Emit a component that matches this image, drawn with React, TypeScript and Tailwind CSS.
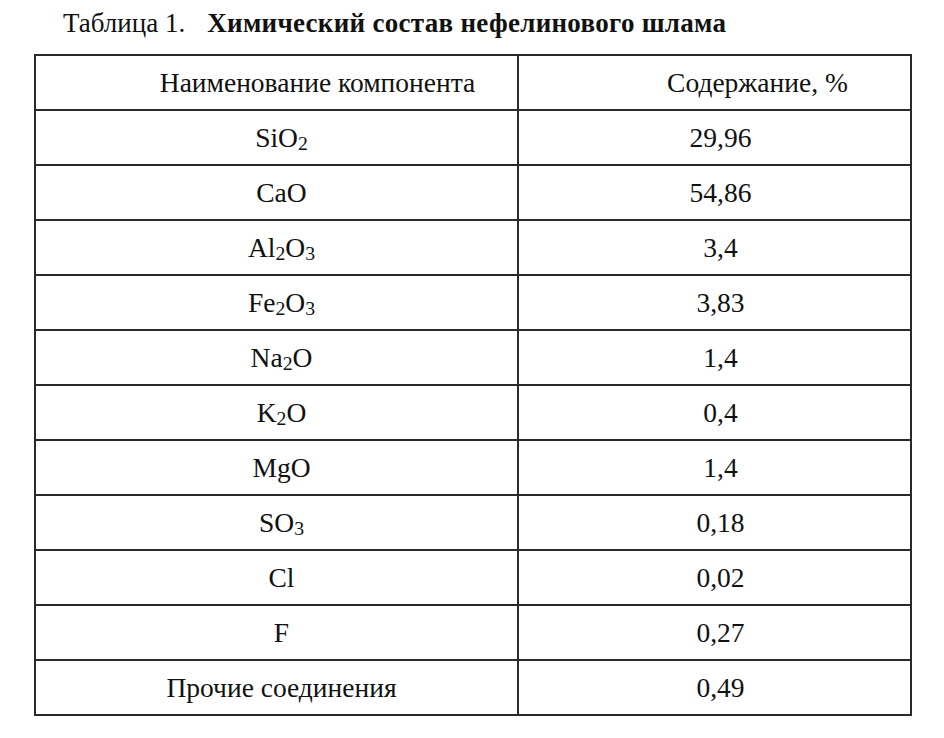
import React from "react";

type Row = {
    name: React.ReactNode;
    value: string;
};

const Sub = ({ children }: { children: React.ReactNode }) => (
    <sub className="bottom-[-0.18em] text-[72%]">{children}</sub>
);

const rows: Row[] = [
    { name: <>SiO<Sub>2</Sub></>, value: "29,96" },
    { name: "CaO", value: "54,86" },
    { name: <>Al<Sub>2</Sub>O<Sub>3</Sub></>, value: "3,4" },
    { name: <>Fe<Sub>2</Sub>O<Sub>3</Sub></>, value: "3,83" },
    { name: <>Na<Sub>2</Sub>O</>, value: "1,4" },
    { name: <>K<Sub>2</Sub>O</>, value: "0,4" },
    { name: "MgO", value: "1,4" },
    { name: <>SO<Sub>3</Sub></>, value: "0,18" },
    { name: "Cl", value: "0,02" },
    { name: "F", value: "0,27" },
    { name: "Прочие соединения", value: "0,49" },
];

const App = () => {
    return (
        <div
            className="w-[944px] h-[738px] bg-white text-[#111]"
            style={{ fontFamily: '"Liberation Serif", "Times New Roman", serif' }}
        >
            <div className="pl-[63px] pt-[8px] text-[27px] leading-[30px]">
                Таблица 1.<span className="ml-[22px] font-bold tracking-[0.3px]">Химический состав нефелинового шлама</span>
            </div>

            <table className="ml-[34px] mt-[16px] w-[878px] border-collapse border-2 border-[#2a2a2a] text-[27.5px]">
                <thead>
                    <tr className="h-[55px]">
                        <th className="w-[483px] border-2 border-[#2a2a2a] pl-[82px] text-center font-normal">
                            Наименование компонента
                        </th>
                        <th className="border-2 border-[#2a2a2a] pl-[86px] text-center font-normal">
                            Содержание, %
                        </th>
                    </tr>
                </thead>
                <tbody>
                    {rows.map((row, i) => (
                        <tr key={i} className="h-[55px]">
                            <td className="border-2 border-[#2a2a2a] pl-[10px] text-center">{row.name}</td>
                            <td className="border-2 border-[#2a2a2a] pl-[12px] text-center">{row.value}</td>
                        </tr>
                    ))}
                </tbody>
            </table>
        </div>
    );
};

export default App;
